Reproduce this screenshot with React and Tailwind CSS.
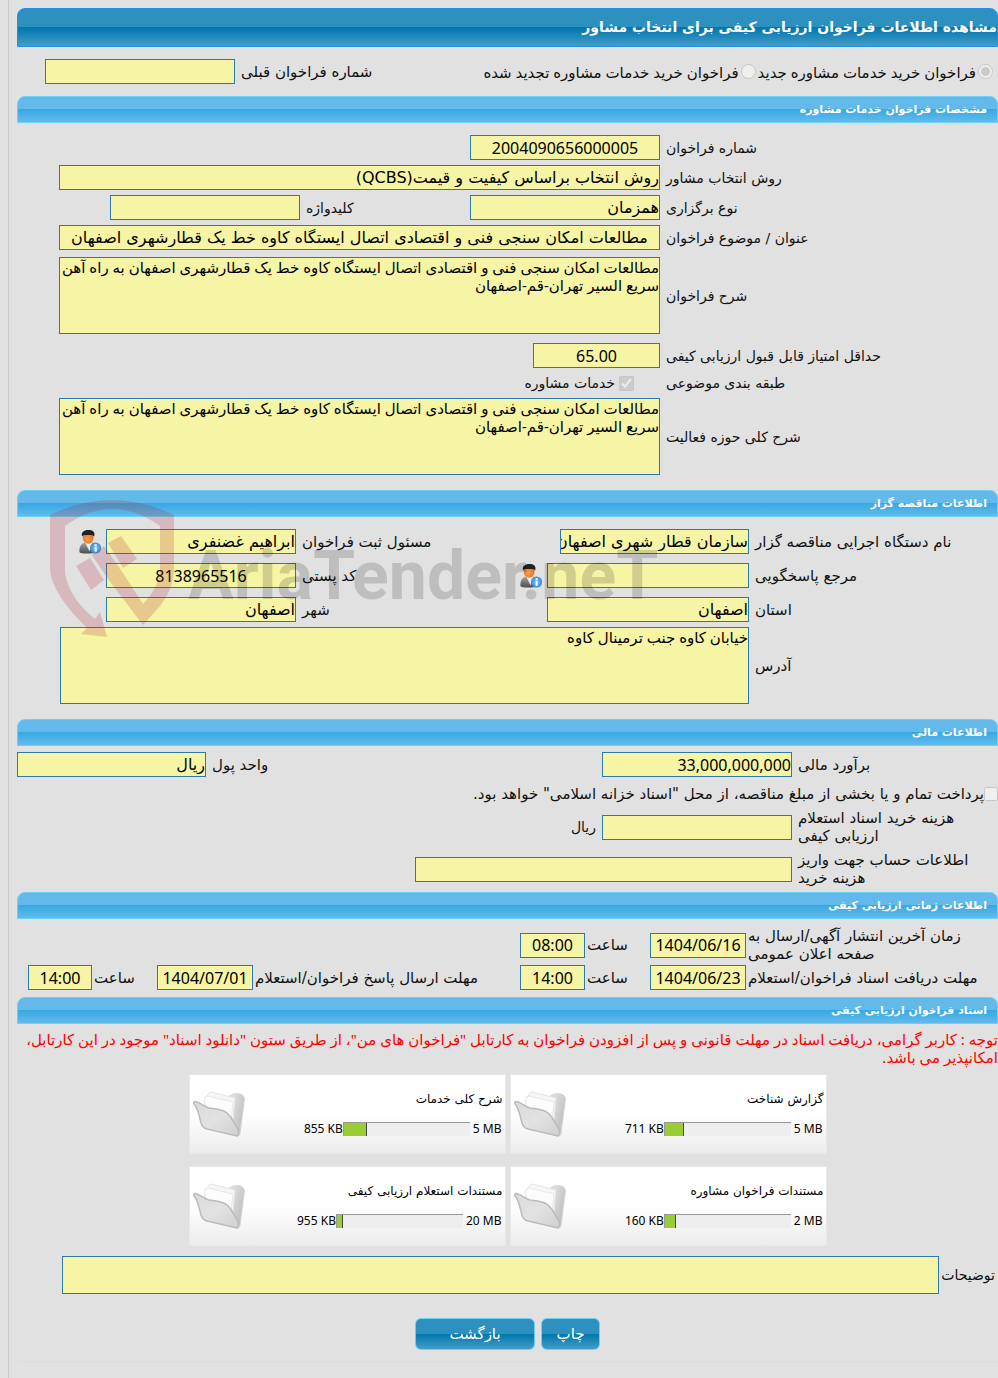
import React from 'react';

const TEXT = 'مطالعات امکان سنجی فنی و اقتصادی اتصال ایستگاه کاوه خط یک قطارشهری اصفهان';
const LONG_TEXT = TEXT + ' به راه آهن سریع السیر تهران-قم-اصفهان';

const files = [
    { title: 'گزارش شناخت', used: '711 KB', max: '5 MB', percent: 15 },
    { title: 'شرح کلی خدمات', used: '855 KB', max: '5 MB', percent: 18 },
    { title: 'مستندات فراخوان مشاوره', used: '160 KB', max: '2 MB', percent: 9 },
    { title: 'مستندات استعلام ارزیابی کیفی', used: '955 KB', max: '20 MB', percent: 5 },
];

function SectionTitle({ children }) {
    return (
        <h2 className="h-[27px] rounded-t-lg border border-[#6ccff5] bg-[linear-gradient(#63b9ea_50%,#38a8e3_50%,#62bbeb)] px-[10px] text-[11px] leading-[25px] font-bold text-white">
            {children}
        </h2>
    );
}

function Label({ id, className = '', children }) {
    return (
        <label htmlFor={id} className={`shrink-0 pl-1.5 text-left ${className}`}>
            {children}
        </label>
    );
}

// Numbers are narrower in Noto Sans, Persian values use the page font
function Field({ id, value = '', numeric = false, className = '' }) {
    return (
        <input
            id={id}
            type="text"
            readOnly
            value={value}
            className={`h-[25px] shrink-0 border border-[#2a7aaa] bg-[#f6f4a5] text-base leading-5 text-black outline-none ${numeric ? "font-['Noto_Sans',sans-serif]" : ''} ${className}`}
        />
    );
}

function Area({ id, value }) {
    return (
        <textarea
            id={id}
            readOnly
            value={value}
            className="block h-[77px] min-w-0 flex-1 resize-none border border-[#2a7aaa] bg-[#f6f4a5] font-['Noto_Sans','DejaVu_Sans',sans-serif] text-[15px] leading-[18px] text-black outline-none"
        />
    );
}

function UserIcon() {
    return (
        <svg width="24" height="25" viewBox="0 0 25 27" className="shrink-0" aria-hidden="true">
            <defs>
                <radialGradient id="face" cx="0.45" cy="0.6" r="0.6">
                    <stop offset="0" stopColor="#ff9d4a" />
                    <stop offset="1" stopColor="#d8701f" />
                </radialGradient>
                <linearGradient id="suit" x1="0" y1="0" x2="0" y2="1">
                    <stop offset="0" stopColor="#a5a5a5" />
                    <stop offset="1" stopColor="#4c4c4c" />
                </linearGradient>
                <radialGradient id="info" cx="0.5" cy="0.5" r="0.6">
                    <stop offset="0" stopColor="#7cc4fa" />
                    <stop offset="1" stopColor="#2b7fd0" />
                </radialGradient>
            </defs>
            <path d="M1 24C1 18 3.500 15.500 7 14.500l8 0c3 1 5 4 5 9 0 2-3 3-10 3s-9-.5-9-2.500Z" fill="url(#suit)" />
            <path d="M7 14l5 10 3-9Z" fill="#ededed" />
            <ellipse cx="10.500" cy="9.500" rx="5.800" ry="6.500" fill="url(#face)" />
            <path d="M4 8C2.500 3.500 6 1 10.500 1c5 0 8 2 6.500 7-2-2-4-1.500-6-1.500-3 0-6-.5-7 1.500Z" fill="#222" />
            <circle cx="18.500" cy="20.500" r="6" fill="url(#info)" />
            <path d="M17.500 19.500h2.200v5h-2.200zM17.500 16.500h2.200v2h-2.200z" fill="#fff" />
        </svg>
    );
}

function FolderIcon() {
    return (
        <svg width="54" height="50" viewBox="0 0 54 50" aria-hidden="true">
            <defs>
                <linearGradient id="folderFront" x1="0" y1="0" x2="1" y2="1">
                    <stop offset="0" stopColor="#dadada" />
                    <stop offset="0.5" stopColor="#e2e2e2" />
                    <stop offset="1" stopColor="#d0d0d0" />
                </linearGradient>
                <linearGradient id="folderBack" x1="0" y1="0" x2="1" y2="0.3">
                    <stop offset="0" stopColor="#f0f0f0" />
                    <stop offset="0.7" stopColor="#dcdcdc" />
                    <stop offset="1" stopColor="#c4c4c4" />
                </linearGradient>
            </defs>
            <path d="M12 14 34 9c4-4 8-5 13-4 4 1 5 4 4 8l-4 31c0 2-1 3-3 3L14 38Z" fill="url(#folderBack)" stroke="#d3d3d3" />
            <path d="M12 8c3 0 3-5 6-5l24 6-3 33-20-6Z" fill="#f6f6f6" stroke="#e4e4e4" />
            <path d="M11 10c2 0 2-3 4-3l25 6-3 28-20-6Z" fill="#fcfcfc" stroke="#e9e9e9" />
            <path d="M1 15c-1-2 1-3 3-2 4 1 7 5 12 6 6 1 13 1 18 5 6 5 7 11 11 16 1 3 1 5-1 7L14 40c-4-1-5-3-6-6C6 27 5 19 1 15Z" fill="url(#folderFront)" stroke="#bbb" strokeWidth="1.500" />
        </svg>
    );
}

function Watermark() {
    return (
        <div dir="ltr" aria-hidden="true" className="pointer-events-none absolute top-[10px] left-[33px] flex items-start">
            <svg width="126" height="138" viewBox="0 0 126 138" className="shrink-0 opacity-20">
                <path
                    fill="#b02030"
                    d="M0 15Q62-15 124 15V70Q124 88 110 106L93 125 58 79 71 70 93 104Q110 86 110 68V26Q62-8 15 26V72Q18 97 45 119L50 112 57 137 31 134 37 128Q2 94 0 70Z"
                />
                <path fill="#b02030" d="M26 66 40 58 54 80 41 90ZM42 55 54 46 71 70 58 79ZM58 43 71 36 87 59 73 68Z" />
            </svg>
            <span className="mt-9 ml-3 font-['Roboto',sans-serif] text-[68px] leading-[80px] font-bold text-black opacity-15">
                AriaTender.neT
            </span>
        </div>
    );
}

function FileCard({ file }) {
    return (
        <div className="flex h-20 items-center justify-between border border-[#e8e8e8] bg-linear-to-b from-white from-50% to-[#ececec] pr-0.5 pl-[3px] text-xs text-black">
            <div>
                <p>{file.title}</p>
                <div className="mt-3.5 flex items-center pr-px font-['Noto_Sans',sans-serif]">
                    <span dir="ltr">{file.max}</span>
                    <div dir="ltr" className="mr-[3px] h-3.5 w-[127px] border-t border-l border-[#999] bg-[#eee]">
                        <div className="h-full border-r border-[#444] bg-[#9acd32]" style={{ width: `${file.percent}%` }} />
                    </div>
                    <span dir="ltr">{file.used}</span>
                </div>
            </div>
            <FolderIcon />
        </div>
    );
}

function App() {
    return (
        <div dir="rtl" className="min-h-screen overflow-hidden bg-[#e1e1e1] pl-2 font-['DejaVu_Sans',sans-serif] text-[15px] leading-[18px] text-[#111]">
            <main className="min-h-screen border-l border-[#c8c8c8] pt-2 pl-2">
                <h1 className="h-[39px] rounded-t-lg border border-[#2090e4] bg-[linear-gradient(#2e90bf_50%,#0076ae_50%,#449dc6)] text-sm leading-[37px] font-bold text-white">
                    مشاهده اطلاعات فراخوان ارزیابی کیفی برای انتخاب مشاور
                </h1>

                {/* Call type */}
                <div className="mt-3 flex items-center justify-between pr-[5px] pl-7">
                    <div className="flex items-center gap-0.5 font-['Noto_Sans','DejaVu_Sans',sans-serif]">
                        <input id="typeNew" type="radio" name="type" disabled defaultChecked className="size-[15px]" />
                        <label htmlFor="typeNew">فراخوان خرید خدمات مشاوره جدید</label>
                        <input id="typeRenew" type="radio" name="type" disabled className="size-[15px]" />
                        <label htmlFor="typeRenew">فراخوان خرید خدمات مشاوره تجدید شده</label>
                    </div>
                    <div className="flex items-center">
                        <Label id="prevNumber">شماره فراخوان قبلی</Label>
                        <Field id="prevNumber" className="w-[190px]" />
                    </div>
                </div>

                {/* Call details */}
                <section className="mt-3">
                    <SectionTitle>مشخصات فراخوان خدمات مشاوره</SectionTitle>
                    <div className="mt-3 flex flex-col gap-[5px] pl-[42px] text-sm leading-[18px]">
                        <div className="flex items-center">
                            <Label id="number" className="w-[338px]">شماره فراخوان</Label>
                            <Field id="number" numeric value="2004090656000005" className="w-[190px] text-center" />
                        </div>
                        <div className="flex items-center">
                            <Label id="method" className="w-[338px]">روش انتخاب مشاور</Label>
                            <Field id="method" value="روش انتخاب براساس کیفیت و قیمت(QCBS)" className="min-w-0 flex-1" />
                        </div>
                        <div className="flex items-center">
                            <Label id="kind" className="w-[338px]">نوع برگزاری</Label>
                            <Field id="kind" value="همزمان" className="w-[190px]" />
                            <Label id="keyword" className="w-[170px]">کلیدواژه</Label>
                            <Field id="keyword" className="w-[190px]" />
                        </div>
                        <div className="flex items-center">
                            <Label id="subject" className="w-[338px]">عنوان / موضوع فراخوان</Label>
                            <Field id="subject" value={TEXT} className="min-w-0 flex-1 text-center" />
                        </div>
                        <div className="mt-0.5 flex items-center">
                            <Label id="desc" className="w-[338px]">شرح فراخوان</Label>
                            <Area id="desc" value={LONG_TEXT} />
                        </div>
                        <div className="mt-1 flex items-center">
                            <Label id="score" className="w-[338px]">حداقل امتیاز قابل قبول ارزیابی کیفی</Label>
                            <Field id="score" numeric value="65.00" className="w-[127px] text-center" />
                        </div>
                        <div className="flex h-5 items-center">
                            <span className="w-[338px] pl-1.5 text-left">طبقه بندی موضوعی</span>
                            <input id="consulting" type="checkbox" disabled defaultChecked className="mr-[26px] ml-1 size-[15px]" />
                            <label htmlFor="consulting">خدمات مشاوره</label>
                        </div>
                        <div className="flex items-center">
                            <Label id="scope" className="w-[338px]">شرح کلی حوزه فعالیت</Label>
                            <Area id="scope" value={LONG_TEXT} />
                        </div>
                    </div>
                </section>

                {/* Tenderer */}
                <section className="relative mt-[15px]">
                    <SectionTitle>اطلاعات مناقصه گزار</SectionTitle>
                    <div className="mt-3 flex flex-col gap-[9px] pl-[43px]">
                        <div className="flex items-center justify-between">
                            <div className="flex items-center">
                                <Label id="org" className="w-[249px]">نام دستگاه اجرایی مناقصه گزار</Label>
                                <Field id="org" value="سازمان قطار شهری اصفهان" className="w-[189px]" />
                            </div>
                            <div className="flex items-center pl-[18px]">
                                <Label id="owner">مسئول ثبت فراخوان</Label>
                                <Field id="owner" value="ابراهیم غضنفری" className="ml-1 w-[190px]" />
                                <UserIcon />
                            </div>
                        </div>
                        <div className="flex items-center">
                            <Label id="contact" className="w-[249px]">مرجع پاسخگویی</Label>
                            <Field id="contact" className="ml-1 w-[202px]" />
                            <UserIcon />
                            <Label id="postal" className="mr-auto">کد پستی</Label>
                            <Field id="postal" numeric value="8138965516" className="ml-[46px] w-[190px] text-center" />
                        </div>
                        <div className="flex items-center">
                            <Label id="province" className="w-[249px]">استان</Label>
                            <Field id="province" value="اصفهان" className="w-[202px]" />
                            <Label id="city" className="mr-auto">شهر</Label>
                            <Field id="city" value="اصفهان" className="ml-[46px] w-[190px]" />
                        </div>
                        <div className="-mt-1 flex items-center">
                            <Label id="address" className="w-[249px]">آدرس</Label>
                            <Area id="address" value="خیابان کاوه جنب ترمینال کاوه" />
                        </div>
                    </div>
                    <Watermark />
                </section>

                {/* Financial */}
                <section className="mt-[15px]">
                    <SectionTitle>اطلاعات مالی</SectionTitle>
                    <div className="mt-1.5 flex items-center">
                        <Label id="estimate" className="w-[206px]">برآورد مالی</Label>
                        <Field id="estimate" numeric value="33,000,000,000" className="w-[190px]" />
                        <Label id="currency" className="mr-auto">واحد پول</Label>
                        <Field id="currency" value="ریال" className="w-[189px]" />
                    </div>
                    <div className="mt-2 flex items-center">
                        <input id="treasury" type="checkbox" disabled className="size-[14px]" />
                        <label htmlFor="treasury">پرداخت تمام و یا بخشی از مبلغ مناقصه، از محل "اسناد خزانه اسلامی" خواهد بود.</label>
                    </div>
                    <div className="mt-1.5 flex items-center">
                        <Label id="docPrice" className="w-[206px]">هزینه خرید اسناد استعلام<br />ارزیابی کیفی</Label>
                        <Field id="docPrice" className="w-[190px]" />
                        <span className="pr-1.5 text-sm">ریال</span>
                    </div>
                    <div className="mt-1.5 flex items-center">
                        <Label id="account" className="w-[206px]">اطلاعات حساب جهت واریز<br />هزینه خرید</Label>
                        <Field id="account" className="w-[377px]" />
                    </div>
                </section>

                {/* Schedule */}
                <section className="mt-[5px]">
                    <SectionTitle>اطلاعات زمانی ارزیابی کیفی</SectionTitle>
                    <div className="mt-2 flex items-center">
                        <label htmlFor="publishDate" className="w-[252px] pl-0.5 text-left">زمان آخرین انتشار آگهی/ارسال به<br />صفحه اعلان عمومی</label>
                        <Field id="publishDate" numeric value="1404/06/16" className="w-[96px] text-center" />
                        <label htmlFor="publishTime" className="w-[65px] pl-0.5 text-left">ساعت</label>
                        <Field id="publishTime" numeric value="08:00" className="w-[65px] text-center" />
                    </div>
                    <div className="mt-0.5 flex items-center pl-[11px]">
                        <label htmlFor="receiveDate" className="w-[252px] pl-0.5 text-left">مهلت دریافت اسناد فراخوان/استعلام</label>
                        <Field id="receiveDate" numeric value="1404/06/23" className="w-[96px] text-center" />
                        <label htmlFor="receiveTime" className="w-[65px] pl-0.5 text-left">ساعت</label>
                        <Field id="receiveTime" numeric value="14:00" className="w-[65px] text-center" />
                        <label htmlFor="replyDate" className="mr-auto pl-0.5">مهلت ارسال پاسخ فراخوان/استعلام</label>
                        <Field id="replyDate" numeric value="1404/07/01" className="w-[96px] text-center" />
                        <label htmlFor="replyTime" className="w-[65px] pl-0.5 text-left">ساعت</label>
                        <Field id="replyTime" numeric value="14:00" className="w-[64px] text-center" />
                    </div>
                </section>

                {/* Documents */}
                <section className="mt-[7px]">
                    <SectionTitle>اسناد فراخوان ارزیابی کیفی</SectionTitle>
                    <p className="mt-1.5 mb-2 font-['Noto_Sans','DejaVu_Sans',sans-serif] text-[#f00]">
                        توجه : کاربر گرامی، دریافت اسناد در مهلت قانونی و پس از افزودن فراخوان به کارتابل "فراخوان های من"، از طریق ستون "دانلود اسناد" موجود در این کارتابل، امکانپذیر می باشد.
                    </p>
                    <div className="mx-auto grid w-[638px] grid-cols-2 gap-x-1 gap-y-3">
                        {files.map((file) => (
                            <FileCard key={file.title} file={file} />
                        ))}
                    </div>
                    <div className="mt-2.5 flex items-center pr-[3px] pl-[45px]">
                        <label htmlFor="notes" className="pl-0.5 text-sm">توضیحات</label>
                        <textarea id="notes" readOnly className="block h-[38px] min-w-0 flex-1 resize-none border border-[#2a7aaa] bg-[#f6f4a5]" />
                    </div>
                </section>

                <div className="mt-6 flex justify-center gap-1.5 border-b border-[#dcdcdc] pb-[11px] text-white">
                    <button type="button" className="h-8 w-[59px] rounded-md border border-[#6ccff5] bg-[linear-gradient(#2e90bf_50%,#0076ae_50%,#449dc6)]">چاپ</button>
                    <button type="button" className="h-8 w-[120px] rounded-md border border-[#6ccff5] bg-[linear-gradient(#2e90bf_50%,#0076ae_50%,#449dc6)]">بازگشت</button>
                </div>
            </main>
        </div>
    );
}

export default App;
